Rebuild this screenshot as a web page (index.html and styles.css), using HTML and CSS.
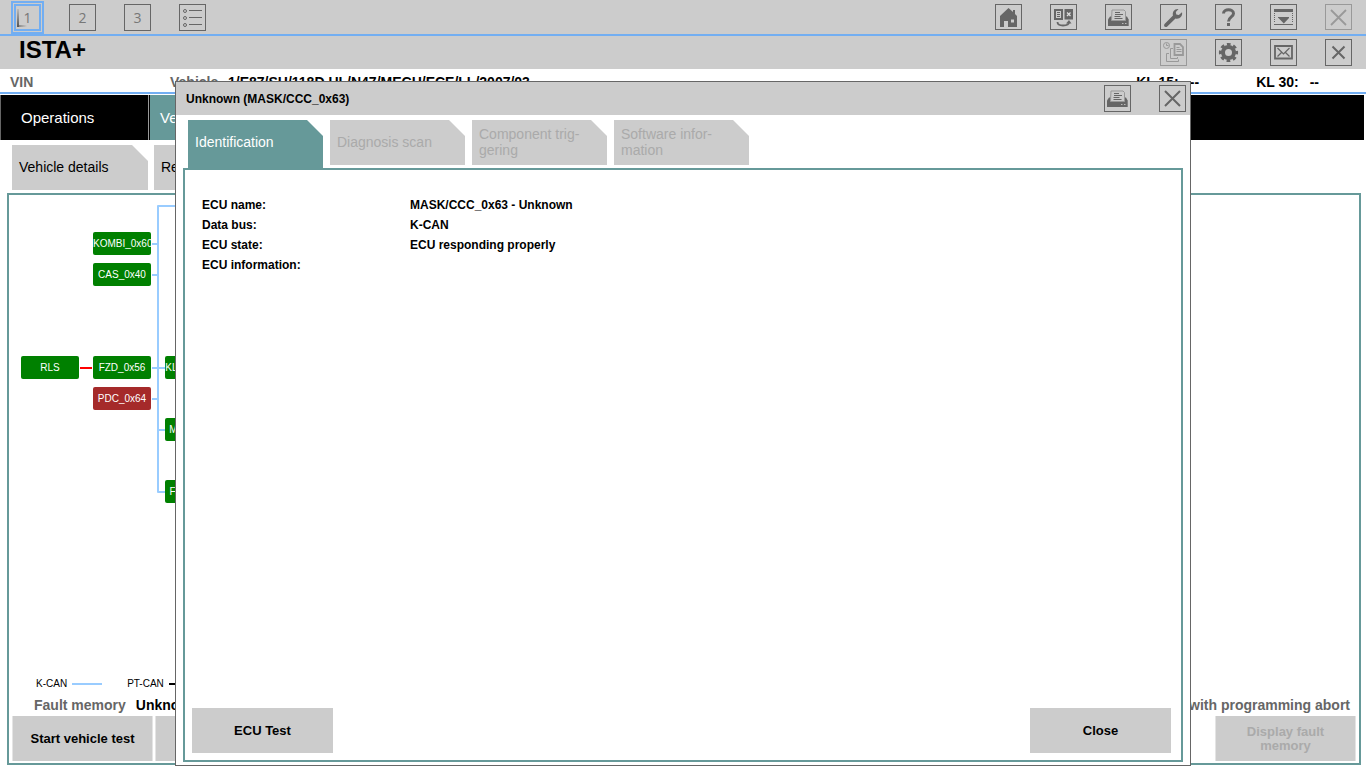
FILE: index.html
```html
<!DOCTYPE html>
<html lang="en">
<head>
<meta charset="utf-8">
<title>ISTA+</title>
<link rel="stylesheet" href="styles.css">
</head>
<body>
<svg class="defs" aria-hidden="true">
  <symbol id="i-print" viewBox="1 1 25 25">
    <path d="M5 12.500h17l1.700 3V22H3v-6.500z" fill="#666"/>
    <path d="M7 6h12l1.500 1.500v9h-14z" fill="#ccc" stroke="#999"/>
    <path d="M10 8.500h5M10 10.500h8M9.500 12.500h6M9.500 14.500h8" stroke="#666" fill="none"/>
    <path d="M17 19.500h1.500M20 19.500h1.500" stroke="#bbb"/>
  </symbol>
</svg>

<div class="app">
  <header class="bar bar--top">
    <div class="tools">
      <button class="icon-btn icon-btn--num icon-btn--current" type="button">1</button>
      <button class="icon-btn icon-btn--num" type="button">2</button>
      <button class="icon-btn icon-btn--num" type="button">3</button>
      <button class="icon-btn" type="button" aria-label="List">
        <svg viewBox="1 1 25 25" fill="none" stroke="#666"><circle cx="6" cy="7" r="1.500"/><circle cx="6" cy="14" r="1.500"/><circle cx="6" cy="21" r="1.500"/><path d="M10 6.500h13M10 13.500h13M10 20.500h13"/></svg>
      </button>
    </div>
    <div class="tools tools--short">
      <button class="icon-btn" type="button" aria-label="Home">
        <svg viewBox="1 1 25 25"><path fill="#666" fill-rule="evenodd" d="M13.500 4L18 8V6h2v4l2 2v11h-9v-6H9v6H5V12zM16 15.500v3h3v-3z"/></svg>
      </button>
      <button class="icon-btn" type="button" aria-label="Swap">
        <svg viewBox="1 1 25 25"><path fill="none" stroke="#666" stroke-width="2" d="M5 6h7v9H5z"/><path stroke="#666" d="M7 8.500h3M7 10.500h3M7 12.500h3"/><path fill="#666" d="M14.500 5H23v10.500h-8.500z"/><path stroke="#ddd" stroke-width="1.300" d="M17 8.500l3.500 3.500M20.500 8.500L17 12"/><path fill="none" stroke="#666" stroke-width="1.800" d="M7.500 18c0 3 2 3.500 5.500 3.500s6-.5 6-3.500"/><path fill="#666" d="M16 19.500l3-3.500 2.500 3.500z"/></svg>
      </button>
      <button class="icon-btn" type="button" aria-label="Print"><svg><use href="#i-print"/></svg></button>
      <button class="icon-btn" type="button" aria-label="Settings">
        <svg viewBox="1 1 25 25"><path fill="#666" d="M4.500 20L13 11.500C12 8 14.500 4.500 18.500 5L15.800 8l.5 2.500 2.500.6L22 8.200c1 4-2.500 7.300-6.500 6.300L7 22.800c-2 1-3.800-.8-2.500-2.800z"/></svg>
      </button>
      <button class="icon-btn" type="button" aria-label="Help">
        <svg viewBox="1 1 25 25"><path fill="none" stroke="#666" stroke-width="3" d="M8.500 9.500c0-5 10-5 10 0 0 3.500-5 3.500-5 8"/><path fill="#666" d="M12 19h3v3h-3z"/></svg>
      </button>
      <button class="icon-btn" type="button" aria-label="Minimise">
        <svg viewBox="1 1 25 25"><path fill="#666" d="M4 5h19v3H4zM8.500 14h10.500l-5.200 5.500zM4 20h19v1H4z"/><path stroke="#666" stroke-dasharray="1 1" d="M4.500 9v10M22.500 9v10"/><path stroke="#666" d="M8 13.500h11"/></svg>
      </button>
      <button class="icon-btn" type="button" aria-label="Exit" disabled>
        <svg viewBox="1 1 25 25"><path stroke="#999" stroke-width="1.800" d="M6 6l15 15M21 6L6 21"/></svg>
      </button>
    </div>
  </header>

  <div class="bar bar--title">
    <h1 class="brand">ISTA+</h1>
    <div class="tools">
      <button class="icon-btn" type="button" aria-label="History" disabled>
        <svg viewBox="1 1 25 25" fill="none" stroke="#999"><circle cx="6.500" cy="6.500" r="3"/><path d="M6.500 4.500v2h2M13 9.500h-2.500v10h7V18M9 14.500H6.500v8h12v-2"/><path stroke-width="1.800" d="M14.500 5h5.500l3 3v8h-8.500z"/><path d="M16.500 8.500h3M16.500 10.500h5M16.500 12.500h5"/></svg>
      </button>
      <button class="icon-btn" type="button" aria-label="Options">
        <svg viewBox="1 1 25 25" fill="none" stroke="#666"><circle cx="13.500" cy="13.500" r="5.500" stroke-width="4"/><circle cx="13.500" cy="13.500" r="8.200" stroke-width="2.800" stroke-dasharray="3.640 2.800" stroke-dashoffset="1.820"/></svg>
      </button>
      <button class="icon-btn" type="button" aria-label="Mail">
        <svg viewBox="1 1 25 25" fill="none" stroke="#666"><path stroke-width="1.800" d="M5 7h17v12.500H5z"/><path stroke-width="1.200" d="M7.500 9l6 6 6-6M7.500 17.500l4-4M19.500 17.500l-4-4"/></svg>
      </button>
      <button class="icon-btn" type="button" aria-label="Close operation">
        <svg viewBox="1 1 25 25"><path stroke="#666" stroke-width="2" d="M7.500 7.500l12 12M19.500 7.500l-12 12"/></svg>
      </button>
    </div>
  </div>

  <div class="info">
    <span class="info__vin">VIN</span>
    <span class="info__label">Vehicle</span>
    <strong class="info__vehicle">1/E87/SH/118D UL/N47/MECH/ECE/LL/2007/03</strong>
    <strong class="info__kl">KL 15:<span>--</span></strong>
    <strong class="info__kl">KL 30:<span>--</span></strong>
  </div>

  <nav class="nav">
    <button class="nav__item" type="button">Operations</button>
    <button class="nav__item nav__item--active" type="button">Vehicle</button>
  </nav>

  <div class="tabs tabs--page">
    <button class="tab" type="button">Vehicle details</button>
    <button class="tab" type="button">Repair</button>
  </div>

  <main class="panel">
    <div class="tree">
      <svg class="tree__lines" width="300" height="320" fill="none" stroke-width="2">
        <path stroke="#9cf" stroke-linejoin="round" d="M290 11H149v286h7M143 49h6M143 80h6M143 173h13M143 204h6M149 235h7"/>
        <path stroke="red" d="M71 173h12"/>
      </svg>
      <span class="node node--kombi">KOMBI_0x60</span>
      <span class="node node--cas">CAS_0x40</span>
      <span class="node node--rls">RLS</span>
      <span class="node node--fzd">FZD_0x56</span>
      <span class="node node--pdc">PDC_0x64</span>
      <span class="node node--klima">KLIMA_0x78</span>
      <span class="node node--mrs">MRS_0x01</span>
      <span class="node node--frm">FRM_0x72</span>
    </div>
    <div class="legend">
      <span class="legend__item">K-CAN<i class="legend__line"></i></span>
      <span class="legend__item">PT-CAN<i class="legend__line legend__line--pt"></i></span>
    </div>
    <div class="status">
      <span>Fault memory</span><strong>Unknown</strong>
      <span class="status__end">with programming abort</span>
    </div>
    <div class="actions">
      <button class="action" type="button">Start vehicle test</button>
      <button class="action" type="button" aria-label="Further action"></button>
      <button class="action action--end" type="button" disabled>Display fault memory</button>
    </div>
  </main>
</div>

<section class="dialog" role="dialog" aria-labelledby="dialog-title">
  <header class="dialog__head">
    <h2 class="dialog__title" id="dialog-title">Unknown (MASK/CCC_0x63)</h2>
    <div class="tools">
      <button class="icon-btn" type="button" aria-label="Print"><svg><use href="#i-print"/></svg></button>
      <button class="icon-btn" type="button" aria-label="Close dialog">
        <svg viewBox="1 1 25 25"><path stroke="#666" stroke-width="2" d="M6 6l15 15M21 6L6 21"/></svg>
      </button>
    </div>
  </header>
  <div class="tabs tabs--dialog">
    <button class="tab tab--active" type="button">Identification</button>
    <button class="tab" type="button" disabled>Diagnosis scan</button>
    <button class="tab" type="button" disabled>Component trig-<br>gering</button>
    <button class="tab" type="button" disabled>Software infor-<br>mation</button>
  </div>
  <div class="dialog__body">
    <dl class="facts">
      <dt>ECU name:</dt><dd>MASK/CCC_0x63 - Unknown</dd>
      <dt>Data bus:</dt><dd>K-CAN</dd>
      <dt>ECU state:</dt><dd>ECU responding properly</dd>
      <dt>ECU information:</dt><dd></dd>
    </dl>
    <div class="dialog__actions">
      <button class="action action--flat" type="button">ECU Test</button>
      <button class="action action--flat" type="button">Close</button>
    </div>
  </div>
</section>
</body>
</html>
```
FILE: styles.css
```css
* { box-sizing: border-box; }

body {
  margin: 0;
  background: #fff;
  color: #000;
  font: 14px/16px "Liberation Sans", Arial, sans-serif;
}

button {
  margin: 0;
  padding: 0;
  border: 0;
  border-radius: 0;
  color: inherit;
  font: inherit;
}

.defs { position: absolute; width: 0; height: 0; }

.app {
  display: flex;
  flex-direction: column;
  height: 100vh;
  overflow: hidden;
}

/* Toolbars */
.bar {
  display: flex;
  justify-content: space-between;
  flex: none;
  padding: 0 14px;
  background: #ccc;
}
.bar--top { height: 36px; padding-top: 4px; border-bottom: 2px solid #72aef2; }
.bar--title { height: 33px; padding-top: 3px; }
.brand { margin: 0 0 0 5px; font-size: 24px; line-height: 22px; }

.tools { display: flex; gap: 28px; }
.icon-btn {
  display: flex;
  align-items: center;
  justify-content: center;
  width: 27px;
  height: 27px;
  border: 1px solid #666;
  background: #ccc;
}
.icon-btn svg { display: block; flex: none; width: 25px; height: 25px; }
.icon-btn:disabled { border-color: #999; }
.tools--short .icon-btn { height: 26px; }
.icon-btn--num { color: #777; font-family: "Open Sans", sans-serif; }
.icon-btn--current {
  border: 2px solid #72aef2;
  outline: 2px solid #72aef2;
  outline-offset: 1px;
  background:
    linear-gradient(#bbb, #555) 1px 3px / 2px 18px no-repeat,
    linear-gradient(90deg, #777, #ccc) 1px 19px / 10px 2px no-repeat,
    #ccc;
}

/* Vehicle line */
.info {
  display: flex;
  align-items: center;
  flex: none;
  height: 25px;
  padding: 2px 47px 0 10px;
  border-bottom: 2px solid #72aef2;
  color: #666;
  font-weight: bold;
}
.info__vin { width: 160px; }
.info__label { width: 58px; }
.info__vehicle { flex: 1; color: #000; }
.info__kl { margin-left: 57px; color: #000; }
.info__kl span { margin-left: 11px; }

/* Main navigation */
.nav {
  display: flex;
  gap: 1px;
  flex: none;
  height: 45px;
  margin: 1px 2px 0 0;
  border-left: 1px solid #666;
  background: #000;
}
.nav__item {
  width: 148px;
  padding-left: 20px;
  border-right: 1px solid #999;
  background: #000;
  color: #fff;
  font-size: 15px;
  text-align: left;
}
.nav__item--active { padding-left: 10px; background: #699; }

/* Cut-corner tabs */
.tabs { display: flex; flex: none; }
.tabs--page { gap: 6px; padding: 5px 12px 3px; }
.tabs--dialog { gap: 7px; height: 53px; padding: 5px 12px 0; }
.tab {
  flex: none;
  width: 136px;
  height: 45px;
  padding: 0 0 2px 7px;
  background: #ccc;
  clip-path: polygon(0 0, calc(100% - 16px) 0, 100% 16px, 100% 100%, 0 100%);
  text-align: left;
}
.tabs--dialog .tab { width: 135px; }
.tab:disabled { color: #aaa; }
.tab--active { height: 48px; padding-bottom: 4px; background: #699; color: #fff; }

/* Control unit tree */
.panel {
  display: flex;
  flex-direction: column;
  flex: 1;
  margin: 0 5px 3px 7px;
  border: 2px solid #699;
}
.tree { position: relative; flex: 1; }
.tree__lines { position: absolute; top: 0; left: 0; }
.node {
  position: absolute;
  width: 58px;
  height: 23px;
  overflow: hidden;
  border-radius: 2px;
  background: green;
  color: #fff;
  font-size: 10px;
  line-height: 23px;
  text-align: center;
  white-space: nowrap;
}
.node--kombi { left: 84px; top: 37px; }
.node--cas { left: 84px; top: 68px; }
.node--rls { left: 12px; top: 161px; }
.node--fzd { left: 84px; top: 161px; }
.node--pdc { left: 84px; top: 192px; background: brown; }
.node--klima { left: 156px; top: 161px; }
.node--mrs { left: 156px; top: 223px; }
.node--frm { left: 156px; top: 285px; }

.legend {
  display: flex;
  gap: 25px;
  padding: 0 27px 5px;
  font-size: 10px;
}
.legend__item { display: flex; align-items: center; gap: 5px; }
.legend__line { width: 30px; height: 2px; background: #9cf; }
.legend__line--pt { background: #000; }

.status {
  display: flex;
  gap: 10px;
  padding: 0 9px 3px 25px;
  color: #666;
  font-weight: bold;
}
.status strong { color: #000; }
.status__end { margin-left: auto; }

.actions { display: flex; gap: 2px; padding: 0 3px 2px; }
.action {
  width: 141px;
  height: 45px;
  padding: 0 20px;
  border: solid #e4e4e4;
  border-width: 0 1px;
  background: #ccc;
  font-size: 13px;
  font-weight: bold;
  line-height: 14px;
}
.action:first-child { padding: 0; }
.action:disabled { color: #aaa; }
.action--end { margin-left: auto; }
.action--flat { padding: 0; border: 0; }

/* Control unit dialog */
.dialog {
  position: fixed;
  top: 81px;
  right: 175px;
  bottom: 2px;
  left: 175px;
  display: flex;
  flex-direction: column;
  border: 1px solid #666;
  background: #fff;
}
.dialog__head {
  display: flex;
  justify-content: space-between;
  align-items: center;
  height: 33px;
  padding: 0 4px 0 10px;
  background: #ccc;
}
.dialog__title { margin: 0; font-size: 12px; }
.dialog__body {
  display: flex;
  flex-direction: column;
  justify-content: space-between;
  flex: 1;
  margin: 0 7px 3px;
  padding: 25px 10px 7px 7px;
  border: 2px solid #699;
}
.facts {
  display: grid;
  grid-template-columns: 208px 1fr;
  margin: 0 0 0 10px;
  font-size: 12px;
  font-weight: bold;
  line-height: 20px;
}
.facts dd { margin: 0; }
.dialog__actions { display: flex; justify-content: space-between; }
```
